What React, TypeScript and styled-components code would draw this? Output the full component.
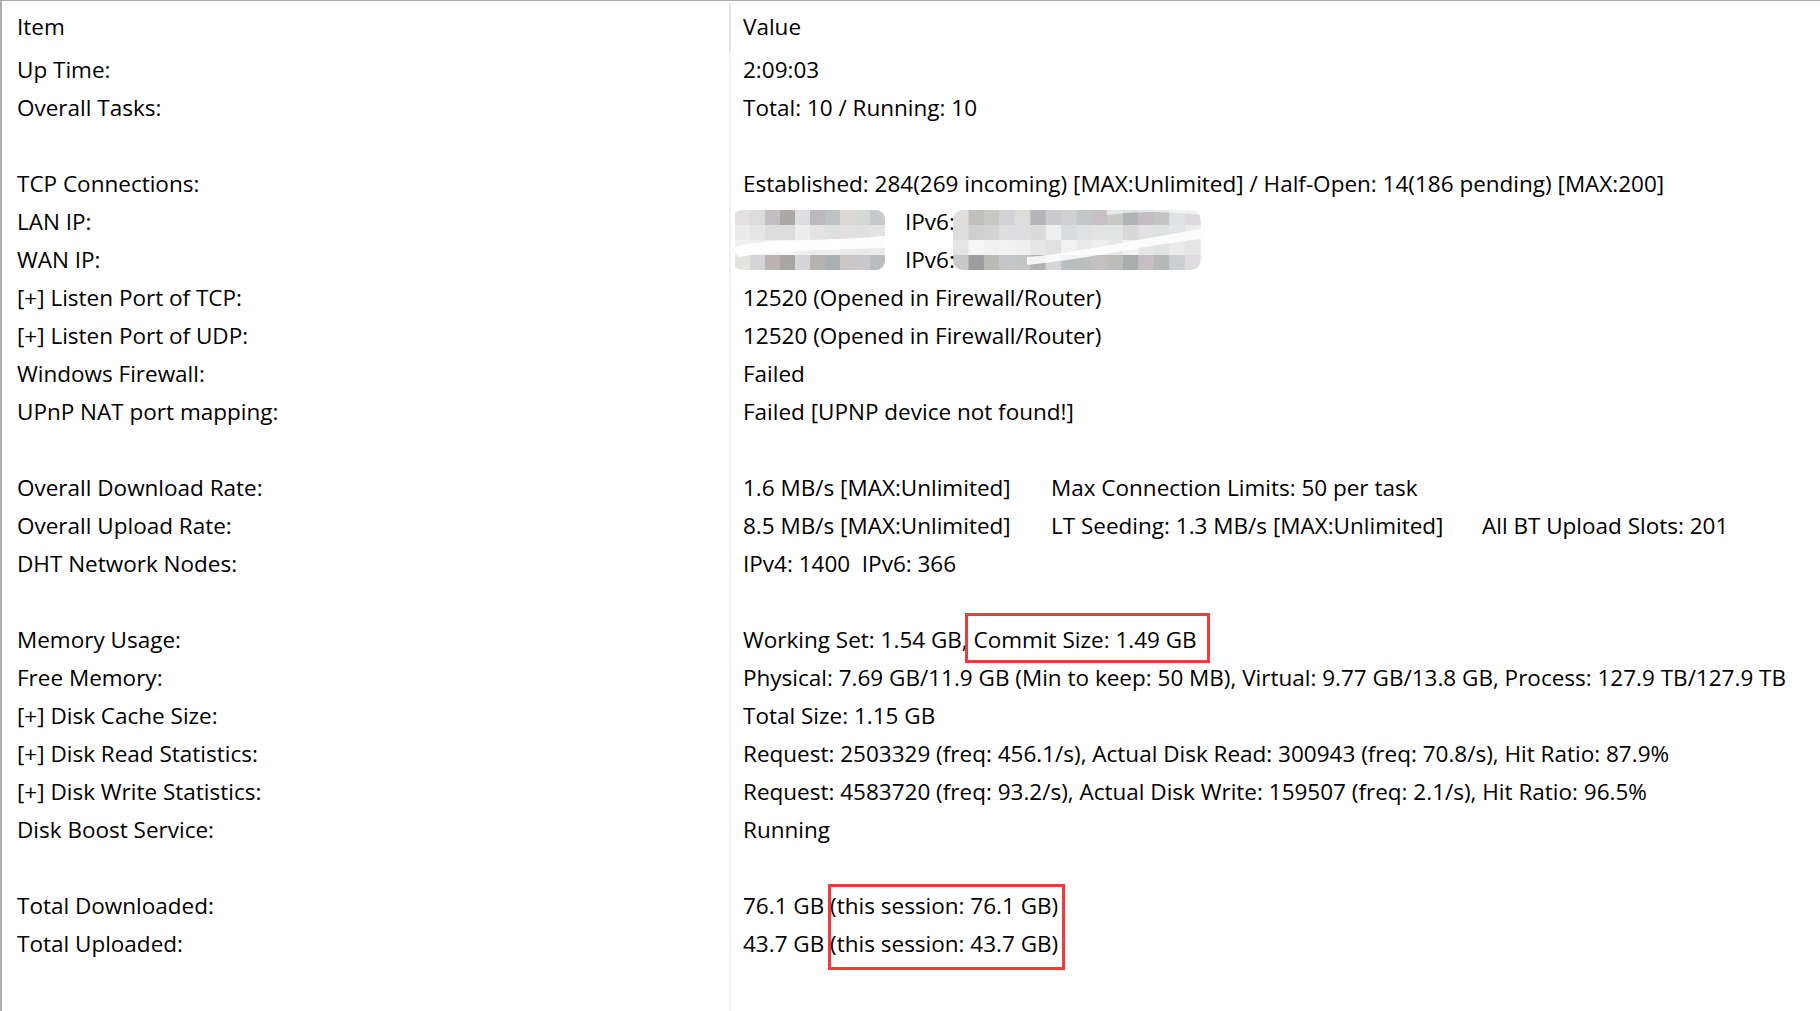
import React from "react";
import styled, { createGlobalStyle } from "styled-components";

const GlobalStyle = createGlobalStyle`
  html, body {
    margin: 0;
    padding: 0;
    background: #ffffff;
  }
  body {
    font-family: "Open Sans", "Noto Sans", "Liberation Sans", sans-serif;
    color: #000000;
  }
`;

const ITEM_COL = 727;

const Panel = styled.div`
  width: 1820px;
  height: 1011px;
  box-sizing: border-box;
  border-top: 1px solid #a9a9b1;
  border-left: 2px solid #adadb4;
  display: flex;
  flex-direction: column;
  overflow: hidden;
  font-size: 22.5px;
`;

const Header = styled.div`
  display: grid;
  grid-template-columns: ${ITEM_COL}px 1fr;
  height: 50px;
`;

const HeaderCell = styled.div<{ $divider?: boolean }>`
  margin-top: 2px;
  height: 48px;
  line-height: 48px;
  padding-left: ${({ $divider }) => ($divider ? "12px" : "15px")};
  border-left: ${({ $divider }) => ($divider ? "2px solid #e3e3e3" : "none")};
`;

const Body = styled.div`
  flex: 1;
  background: linear-gradient(
    90deg,
    transparent ${ITEM_COL}px,
    #eaf2fc ${ITEM_COL}px,
    #eaf2fc ${ITEM_COL + 2}px,
    transparent ${ITEM_COL + 2}px
  );
`;

const RowBox = styled.div`
  display: grid;
  grid-template-columns: ${ITEM_COL}px 1fr;
  height: 38px;
  line-height: 38px;
  white-space: pre;
`;

const ItemCell = styled.div`
  padding-left: 15px;
`;

const ValueCell = styled.div`
  position: relative;
  padding-left: 14px;
`;

// tab stop: fixed-width segment inside a value
const Tab = styled.span<{ $w: number }>`
  display: inline-block;
  width: ${({ $w }) => $w}px;
`;

const Highlight = styled.span<{ $t: number; $r: number; $b: number; $l: number }>`
  display: inline-block;
  position: relative;
  &::after {
    content: "";
    position: absolute;
    top: ${({ $t }) => $t}px;
    right: ${({ $r }) => $r}px;
    bottom: ${({ $b }) => $b}px;
    left: ${({ $l }) => $l}px;
    border: 3px solid #f03b3b;
  }
`;

const MaskSvg = styled.svg`
  position: absolute;
  left: -2px;
  top: 2px;
  pointer-events: none;
`;

const Row: React.FC<{ item?: string; children?: React.ReactNode }> = ({ item, children }) => (
  <RowBox>
    <ItemCell>{item}</ItemCell>
    <ValueCell>{children}</ValueCell>
  </RowBox>
);

const leftCells = [
  ["#e3e2e0", "#dcdcde", "#c2bfc0", "#aea8a5", "#dedee2", "#bdb8bd", "#bec2c4", "#dcd8d6", "#d5d8d5", "#c7cacc"],
  ["#ebebeb", "#e4e4e6", "#dedddc", "#dcdcdc", "#eeedee", "#e3e3e3", "#dde1e0", "#e1dfe0", "#dfe0df", "#e2e3e4"],
  ["#f2f2f2", "#eeeeee", "#f3f3f3", "#f6f6f6", "#f0f0f0", "#ececec", "#efefef", "#eaeaea", "#e8e8e8", "#ebebeb"],
  ["#e6e4e0", "#d4d5d9", "#bab4b4", "#aaa7a2", "#d5d6da", "#b7b1b2", "#a9b0b2", "#cbc5c6", "#cac8ca", "#b9bcc0"],
];

const rightCells = [
  ["#e0dfdd", "#c1c0bf", "#c8c9c4", "#d3d2d8", "#dcdcd8", "#b6b4bb", "#cbcbcd", "#d0d0d3", "#c4c7c8", "#c8bec3", "#c9cac4", "#b1b4b7", "#c6bcc4", "#c3c5c3", "#dfe2e3", "#dcdadc"],
  ["#dddddb", "#cfcfd0", "#d3d3d3", "#dedee0", "#dcdddf", "#dadada", "#efeeee", "#d8dcdf", "#dfe1e2", "#e3e3e3", "#e1e4e4", "#d8d8d8", "#e4e1e5", "#dee1e2", "#e1e5e6", "#ececec"],
  ["#e4e4e4", "#f7f6f4", "#f0f0f0", "#f1f1f2", "#efefef", "#e6e6e6", "#e1e1e3", "#f1f1f1", "#eaeaea", "#eeeeee", "#e7e7e7", "#f2f2f2", "#e6e6e6", "#e0e3e4", "#ebebeb", "#e4e4e4"],
  ["#c9c9c9", "#9d9da0", "#b9bab5", "#c5c6c7", "#c3c5c2", "#b1b1b1", "#d6d6d6", "#b9bec2", "#bbbfbe", "#c6bfbf", "#bcbdbb", "#aaadae", "#c6bec3", "#b4bab5", "#cbcfd2", "#dedcdf"],
];

const Cells: React.FC<{ x: number; y: number; cw: number; colors: string[][]; clip: string }> = ({ x, y, cw, colors, clip }) => (
  <g clipPath={`url(#${clip})`}>
    {colors.map((row, r) =>
      row.map((c, i) => <rect key={`${r}-${i}`} x={x + i * cw} y={y + r * 15} width={cw + 0.5} height={15.5} fill={c} />)
    )}
  </g>
);

// pixelated (blurred) addresses over LAN / WAN rows
const IpMask: React.FC = () => (
  <MaskSvg width={480} height={72} viewBox="0 0 480 72">
    <defs>
      <clipPath id="mask-l">
        <rect x={6} y={5} width={152} height={60} rx={9} />
      </clipPath>
      <clipPath id="mask-r">
        <rect x={226} y={5} width={248} height={60} rx={10} />
      </clipPath>
    </defs>
    <Cells x={8} y={5} cw={15} colors={leftCells} clip="mask-l" />
    <Cells x={226} y={5} cw={15.45} colors={rightCells} clip="mask-r" />
    <path d="M2 44 C30 32 80 38 158 31 L158 43 C110 45 60 44 12 52 Z" fill="#ffffff" opacity={0.9} />
    <path d="M300 52 C350 48 400 36 474 24 L474 34 C420 40 360 54 300 60 Z" fill="#ffffff" opacity={0.85} />
    <path d="M380 4 C410 0 440 0 474 6 L474 10 C440 6 410 6 380 10 Z" fill="#ffffff" opacity={0.6} />
  </MaskSvg>
);

const App: React.FC = () => {
  return (
    <>
      <GlobalStyle />
      <Panel>
        <Header>
          <HeaderCell>Item</HeaderCell>
          <HeaderCell $divider>Value</HeaderCell>
        </Header>
        <Body>
          <Row item="Up Time:">2:09:03</Row>
          <Row item="Overall Tasks:">Total: 10 / Running: 10</Row>
          <Row />
          <Row item="TCP Connections:">
            Established: 284(269 incoming) [MAX:Unlimited] / Half-Open: 14(186 pending) [MAX:200]
          </Row>
          <Row item="LAN IP:">
            <IpMask />
            <Tab $w={162} />
            IPv6:
          </Row>
          <Row item="WAN IP:">
            <Tab $w={162} />
            IPv6:
          </Row>
          <Row item="[+] Listen Port of TCP:">12520 (Opened in Firewall/Router)</Row>
          <Row item="[+] Listen Port of UDP:">12520 (Opened in Firewall/Router)</Row>
          <Row item="Windows Firewall:">Failed</Row>
          <Row item="UPnP NAT port mapping:">Failed [UPNP device not found!]</Row>
          <Row />
          <Row item="Overall Download Rate:">
            <Tab $w={308}>1.6 MB/s [MAX:Unlimited]</Tab>
            Max Connection Limits: 50 per task
          </Row>
          <Row item="Overall Upload Rate:">
            <Tab $w={308}>8.5 MB/s [MAX:Unlimited]</Tab>
            <Tab $w={431}>LT Seeding: 1.3 MB/s [MAX:Unlimited]</Tab>
            All BT Upload Slots: 201
          </Row>
          <Row item="DHT Network Nodes:">IPv4: 1400  IPv6: 366</Row>
          <Row />
          <Row item="Memory Usage:">
            Working Set: 1.54 GB, <Highlight $t={-8} $r={-13} $b={-4} $l={-9}>Commit Size: 1.49 GB</Highlight>
          </Row>
          <Row item="Free Memory:">
            Physical: 7.69 GB/11.9 GB (Min to keep: 50 MB), Virtual: 9.77 GB/13.8 GB, Process: 127.9 TB/127.9 TB
          </Row>
          <Row item="[+] Disk Cache Size:">Total Size: 1.15 GB</Row>
          <Row item="[+] Disk Read Statistics:">
            Request: 2503329 (freq: 456.1/s), Actual Disk Read: 300943 (freq: 70.8/s), Hit Ratio: 87.9%
          </Row>
          <Row item="[+] Disk Write Statistics:">
            Request: 4583720 (freq: 93.2/s), Actual Disk Write: 159507 (freq: 2.1/s), Hit Ratio: 96.5%
          </Row>
          <Row item="Disk Boost Service:">Running</Row>
          <Row />
          <Row item="Total Downloaded:">
            76.1 GB <Highlight $t={-3} $r={-7} $b={-45} $l={-2}>(this session: 76.1 GB)</Highlight>
          </Row>
          <Row item="Total Uploaded:">43.7 GB (this session: 43.7 GB)</Row>
        </Body>
      </Panel>
    </>
  );
};

export default App;
